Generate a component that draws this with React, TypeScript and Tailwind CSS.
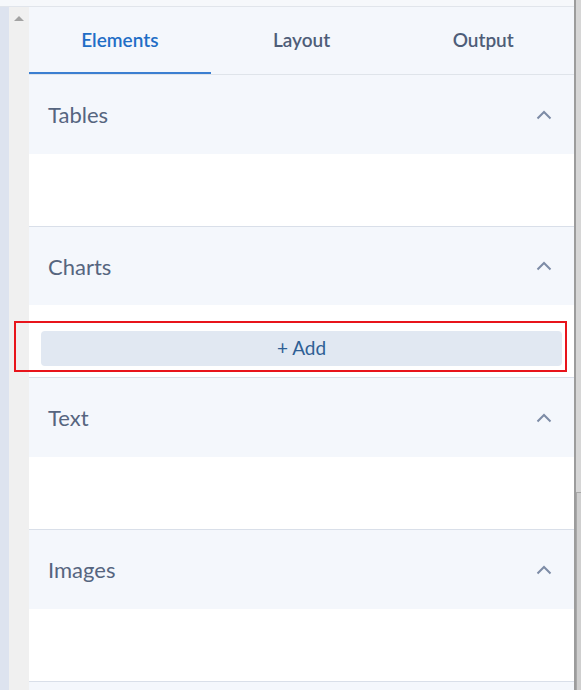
const font = "font-['Lato','Noto_Sans',sans-serif]";

function Chevron() {
  return (
    <svg width="16" height="10" viewBox="0 0 16 10" className="text-[#7d8ca6]">
      <polyline points="1.5,8.5 8,2 14.5,8.5" fill="none" stroke="currentColor" strokeWidth="2" />
    </svg>
  );
}

function Section({ title, children }: { title: string; children?: React.ReactNode }) {
  return (
    <div className="border-b border-[#d9dfe9]">
      <div className="flex h-[79px] items-center justify-between bg-[#f4f7fc] pl-[19px] pr-[22px]">
        <span className="text-[22px] text-[#56657f]">{title}</span>
        <Chevron />
      </div>
      <div className="h-[72px] bg-white">{children}</div>
    </div>
  );
}

export default function App() {
  const tabs = ['Elements', 'Layout', 'Output'];
  return (
    <div className={`relative flex h-[690px] w-[581px] overflow-hidden bg-white ${font}`}>
      <div className="flex flex-1 flex-col">
        <div className="h-[7px] border-b border-[#e1e5eb] bg-[#f6f8fb]" />
        <div className="flex flex-1">
          <div className="w-[9px] bg-[#dde3ef]" />
          <div className="flex w-[20px] justify-center bg-[#f0f0f0] pt-[9px]">
            <div className="h-0 w-0 border-x-[5px] border-b-[5px] border-x-transparent border-b-[#a3a3a3]" />
          </div>
          <div className="flex flex-1 flex-col">
            <div className="flex h-[68px] border-b border-[#dfe4ea] bg-[#f4f7fc]">
              {tabs.map((t, i) => (
                <div
                  key={t}
                  className={`flex flex-1 items-center justify-center text-[19px] font-semibold ${
                    i === 0 ? 'border-b-2 border-[#3b7fd1] pt-[2px] text-[#1f6ec6]' : 'text-[#4e5d78]'
                  }`}
                >
                  {t}
                </div>
              ))}
            </div>
            <Section title="Tables" />
            <div className="border-b border-[#d9dfe9]">
              <div className="flex h-[78px] items-center justify-between bg-[#f4f7fc] pl-[19px] pr-[22px]">
                <span className="text-[22px] text-[#56657f]">Charts</span>
                <Chevron />
              </div>
              <div className="h-[72px] bg-white px-[12px] pt-[26px]">
                <button className="flex h-[35px] w-full items-center justify-center rounded-[4px] bg-[#e1e8f2] text-[19px] text-[#2e5f95]">
                  + Add
                </button>
              </div>
            </div>
            <Section title="Text" />
            <Section title="Images" />
            <div className="flex-1 bg-[#f4f7fc]" />
          </div>
        </div>
      </div>
      <div className="flex w-[7px] flex-col border-l-2 border-[#9c9c9c] bg-[#d6d6d6]">
        <div className="h-[492px]" />
        <div className="flex-1 border-t border-l border-[#a8a8a8] bg-[#cfcfcf]" />
      </div>
      <div className="pointer-events-none absolute left-[14px] top-[321px] h-[51px] w-[553px] border-2 border-[#e8141b]" />
    </div>
  );
}
